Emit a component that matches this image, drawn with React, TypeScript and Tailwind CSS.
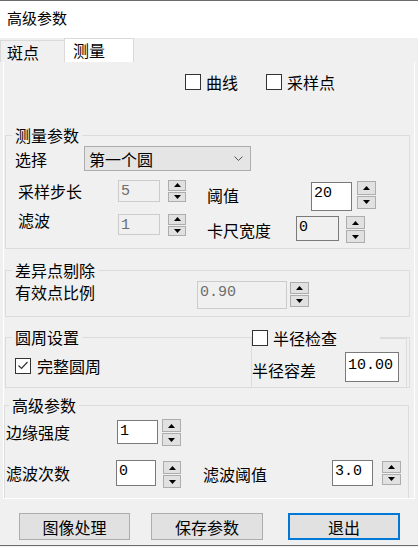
import React from "react";

const DIGITS = "font-['Liberation_Mono',monospace] text-[15px]";

function Field({ value, className, disabled }: { value: string; className: string; disabled?: boolean }) {
  const look = disabled
    ? "border-[#cccccc] bg-[#f0f0f0] text-[#6d6d6d]"
    : "border-[#7a7a7a] bg-white text-black";
  return (
    <div className={`shrink-0 border pl-[2px] pt-[2px] leading-[18px] ${DIGITS} ${look} ${className}`}>
      {value}
    </div>
  );
}

function Spin({ className }: { className: string }) {
  return (
    <div className={`shrink-0 flex flex-col gap-[1px] ${className}`}>
      <div className="flex-1 bg-[#e1e1e1] border border-[#adadad] flex items-center justify-center">
        <svg width="7" height="4" viewBox="0 0 7 4">
          <path d="M0 4L3.5 0L7 4Z" fill="#000" />
        </svg>
      </div>
      <div className="flex-1 bg-[#e1e1e1] border border-[#adadad] flex items-center justify-center">
        <svg width="7" height="4" viewBox="0 0 7 4">
          <path d="M0 0L3.5 4L7 0Z" fill="#000" />
        </svg>
      </div>
    </div>
  );
}

function Check({ checked }: { checked?: boolean }) {
  return (
    <div className="w-[16px] h-[16px] shrink-0 border border-[#333333] bg-white">
      {checked && (
        <svg width="14" height="14" viewBox="0 0 14 14">
          <polyline points="2.5,6.5 5.5,9.5 11.5,3" stroke="#333333" strokeWidth="1.2" fill="none" />
        </svg>
      )}
    </div>
  );
}

export default function App() {
  return (
    <div className="w-[418px] h-[547px] bg-[#f0f0f0] flex flex-col text-[16px] text-black overflow-hidden font-['Noto_Sans_CJK_SC',sans-serif]">
      <div className="h-[1px] bg-[#6b6b6b]" />
      <div className="h-[37px] bg-white pl-[7px] pt-[9px] text-[15px] leading-[16px]">高级参数</div>

      {/* tabs */}
      <div className="h-[24px] flex items-end">
        <div className="w-[64px] h-[22px] border-l border-t border-[#d9d9d9] pl-[6px] pt-[3px] leading-[16px]">斑点</div>
        <div className="w-[70px] h-[24px] bg-white border border-b-0 border-[#d9d9d9] pl-[8px] pt-[3px] leading-[16px]">测量</div>
      </div>

      <div className="ml-[3px] w-[412px] h-[437px] border-l border-r border-b border-white overflow-hidden flex flex-col leading-[16px]">
        <div className="mt-[12px] flex items-center h-[16px]">
          <div className="ml-[181px]">
            <Check />
          </div>
          <span className="ml-[5px]">曲线</span>
          <div className="ml-[28px]">
            <Check />
          </div>
          <span className="ml-[5px]">采样点</span>
        </div>

        {/* 测量参数 */}
        <fieldset className="mt-[37px] ml-[1px] w-[405px] border border-[#dcdcdc] pb-[5px]">
          <legend className="ml-[6px] px-[3px] leading-[16px]">测量参数</legend>
          <div className="mt-[3px] flex items-center h-[25px]">
            <span className="ml-[9px] w-[69px] shrink-0">选择</span>
            <div className="w-[167px] h-[25px] bg-[#e5e5e5] border border-[#adadad] flex items-center justify-between pl-[4px] pr-[7px]">
              <span>第一个圆</span>
              <svg width="9" height="5" viewBox="0 0 9 5">
                <polyline points="0.5,0.5 4.5,4.5 8.5,0.5" stroke="#555" fill="none" />
              </svg>
            </div>
          </div>
          <div className="mt-[9px] flex items-start">
            <span className="ml-[12px] w-[100px] mt-[3px] shrink-0">采样步长</span>
            <Field value="5" disabled className="w-[42px] h-[22px]" />
            <Spin className="ml-[8px] w-[18px] h-[22px]" />
            <span className="ml-[21px] w-[104px] mt-[7px] shrink-0">阈值</span>
            <Field value="20" className="w-[41px] h-[29px] mt-[2px]" />
            <Spin className="ml-[5px] w-[19px] h-[28px] mt-[1px]" />
          </div>
          <div className="mt-[1px] flex items-start">
            <span className="ml-[12px] w-[100px] shrink-0">滤波</span>
            <Field value="1" disabled className="w-[42px] h-[21px] mt-[2px]" />
            <Spin className="ml-[8px] w-[18px] h-[22px] mt-[2px]" />
            <span className="ml-[21px] w-[89px] mt-[10px] shrink-0">卡尺宽度</span>
            <Field value="0" className="w-[43px] h-[25px] mt-[4px] !bg-[#f0f0f0]" />
            <Spin className="ml-[7px] w-[19px] h-[27px] mt-[4px]" />
          </div>
        </fieldset>

        {/* 差异点剔除 */}
        <fieldset className="mt-[13px] ml-[1px] w-[405px] border border-[#dcdcdc] pb-[7px]">
          <legend className="ml-[6px] px-[3px] leading-[16px]">差异点剔除</legend>
          <div className="mt-[3px] flex items-start">
            <span className="ml-[9px] w-[182px] mt-[3px] shrink-0">有效点比例</span>
            <Field value="0.90" disabled className="w-[90px] h-[28px]" />
            <Spin className="ml-[3px] w-[19px] h-[25px] mt-[1px]" />
          </div>
        </fieldset>

        {/* 圆周设置 */}
        <div className="relative mt-[12px] ml-[1px] w-[405px]">
          <fieldset className="w-[405px] border border-[#dcdcdc] pb-[13px]">
            <legend className="ml-[6px] px-[3px] leading-[16px]">圆周设置</legend>
            <div className="mt-[13px] flex items-center h-[16px]">
              <div className="ml-[9px]">
                <Check checked />
              </div>
              <span className="ml-[6px]">完整圆周</span>
            </div>
          </fieldset>
          <fieldset className="absolute left-[246px] top-[-3px] w-[156px] h-[62px] border border-[#dcdcdc]">
            <legend className="w-[128px] h-[24px] flex items-center bg-[#f0f0f0]">
              <Check />
              <span className="ml-[5px]">半径检查</span>
            </legend>
            <div className="mt-[2px] flex items-start">
              <span className="w-[93px] mt-[10px] shrink-0">半径容差</span>
              <Field value="10.00" className="w-[54px] h-[30px] pt-[4px]" />
            </div>
          </fieldset>
        </div>

        {/* 高级参数 */}
        <fieldset className="mt-[9px] w-[405px] border border-[#dcdcdc] pb-[20px]">
          <legend className="ml-[4px] px-[3px] leading-[16px]">高级参数</legend>
          <div className="mt-[6px] flex items-start">
            <span className="ml-[1px] w-[111px] mt-[5px] shrink-0">边缘强度</span>
            <Field value="1" className="w-[41px] h-[24px] mt-[1px]" />
            <Spin className="ml-[4px] w-[19px] h-[27px]" />
          </div>
          <div className="mt-[14px] flex items-start">
            <span className="ml-[1px] w-[110px] mt-[5px] shrink-0">滤波次数</span>
            <Field value="0" className="w-[40px] h-[26px]" />
            <Spin className="ml-[7px] w-[18px] h-[27px] mt-[1px]" />
            <span className="ml-[22px] w-[129px] mt-[6px] shrink-0">滤波阈值</span>
            <Field value="3.0" className="w-[41px] h-[26px]" />
            <Spin className="ml-[9px] w-[19px] h-[24px] mt-[1px]" />
          </div>
        </fieldset>
      </div>

      {/* buttons */}
      <div className="mt-[14px] flex">
        <button className="ml-[19px] w-[111px] h-[27px] bg-[#e1e1e1] border border-[#adadad] leading-[16px]">图像处理</button>
        <button className="ml-[21px] w-[112px] h-[27px] bg-[#e1e1e1] border border-[#adadad] leading-[16px]">保存参数</button>
        <button className="ml-[25px] w-[112px] h-[27px] bg-[#e1e1e1] border-2 border-[#0078d7] leading-[16px]">退出</button>
      </div>
      <div className="mt-[5px] h-[1px] bg-[#6b6b6b]" />
    </div>
  );
}
